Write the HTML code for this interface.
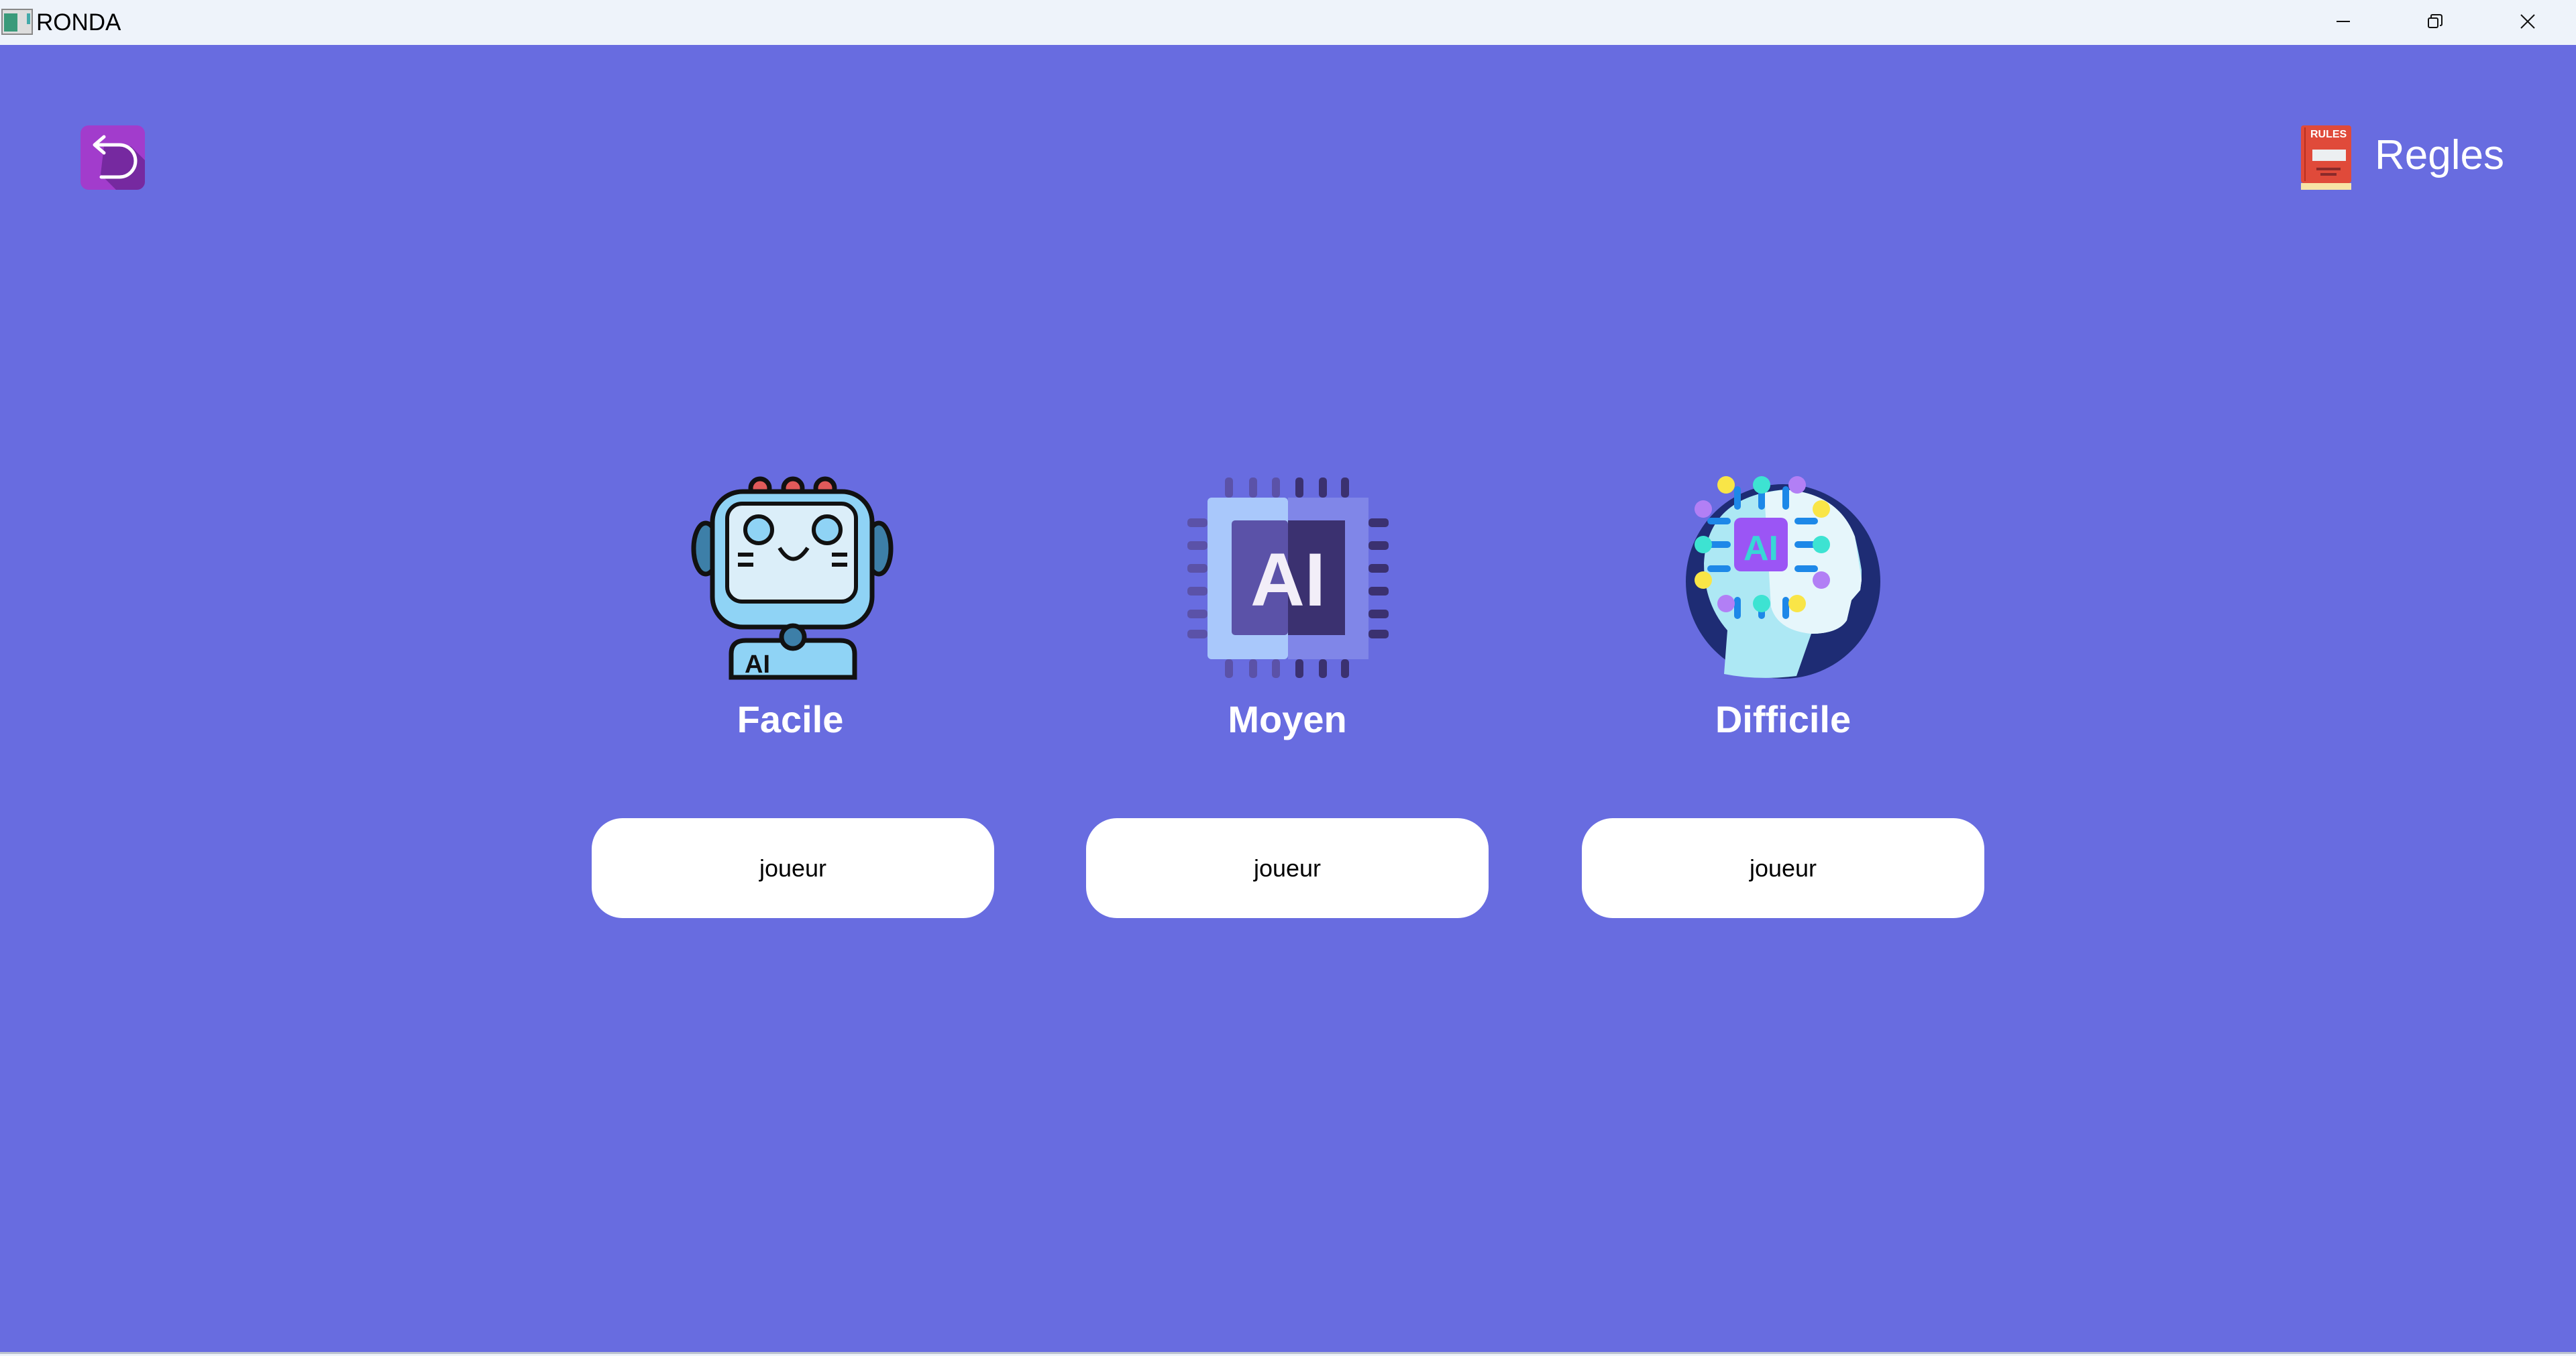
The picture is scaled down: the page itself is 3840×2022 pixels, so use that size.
<!DOCTYPE html>
<html><head><meta charset="utf-8"><style>
html,body{margin:0;padding:0;width:3840px;height:2022px;overflow:hidden;background:#eef3fa;font-family:"Liberation Sans",sans-serif}
.main{position:absolute;left:0;top:67px;width:3840px;height:1949px;background:#686ce0}
.line{position:absolute;left:0;top:2016px;width:3840px;height:3px;background:#bcc3cf}
.title{position:absolute;left:54px;top:14px;font-size:35px;color:#000}
.lbl{position:absolute;color:#fff;font-weight:bold;font-size:56px;text-align:center;width:600px;top:1040px}
.btn{position:absolute;top:1220px;width:600px;height:149px;background:#fff;border-radius:46px;text-align:center;line-height:149px;font-size:36px;color:#000}
.reg{position:absolute;left:3540px;top:196px;font-size:62px;color:#fff}
svg{position:absolute;left:0;top:0}
</style></head><body>
<div class="main"></div>
<div class="line"></div>
<div class="title">RONDA</div>
<div class="lbl" style="left:878px">Facile</div>
<div class="lbl" style="left:1619px">Moyen</div>
<div class="lbl" style="left:2358px">Difficile</div>
<div class="btn" style="left:882px">joueur</div>
<div class="btn" style="left:1619px">joueur</div>
<div class="btn" style="left:2358px">joueur</div>
<div class="reg">Regles</div>
<svg width="3840" height="2022" viewBox="0 0 3840 2022">
<rect x="3" y="14" width="45" height="37" fill="#ddd" stroke="#888" stroke-width="2"/>
<rect x="6" y="20" width="20" height="27" fill="#3a9a7a"/>
<rect x="40" y="20" width="5" height="16" fill="#4aa"/>
<line x1="3483" y1="32" x2="3503" y2="32" stroke="#111" stroke-width="2"/>
<rect x="3620" y="27" width="14" height="14" rx="2" fill="none" stroke="#111" stroke-width="2"/>
<path d="M3624 27 V24 Q3624 22 3626 22 H3637 Q3640 22 3640 25 V36 Q3640 38 3637 38" fill="none" stroke="#111" stroke-width="2"/>
<path d="M3758 22 L3778 42 M3778 22 L3758 42" stroke="#111" stroke-width="2"/>
<clipPath id="bc"><rect x="120" y="187" width="96" height="96" rx="12"/></clipPath>
<rect x="120" y="187" width="96" height="96" rx="12" fill="#a23ccc"/>
<path d="M155 218 L195 218 L230 253 L230 300 L190 300 L150 260 Z" fill="#7629a0" clip-path="url(#bc)"/>
<path d="M143 216 H178 A19 19 0 0 1 178 264 H151" fill="none" stroke="#fff" stroke-width="5" stroke-linecap="round"/>
<path d="M155 204 L141 216 L155 228" fill="none" stroke="#fff" stroke-width="5" stroke-linecap="round" stroke-linejoin="round"/>
<rect x="3430" y="187" width="75" height="86" rx="4" fill="#e04a3a"/>
<rect x="3435" y="190" width="2" height="80" fill="#b83020"/>
<rect x="3430" y="273" width="75" height="10" fill="#f7e3a6"/>
<text x="3444" y="205" font-size="16" font-weight="bold" fill="#fff" font-family="Liberation Sans">RULES</text>
<rect x="3447" y="223" width="50" height="17" fill="#eceff1"/>
<rect x="3453" y="250" width="36" height="4" fill="#8a2a2a"/>
<rect x="3459" y="258" width="24" height="4" fill="#8a2a2a"/>
<g stroke="#111" stroke-width="7">
<circle cx="1133" cy="728" r="14" fill="#e05a5a"/>
<circle cx="1182" cy="728" r="14" fill="#e05a5a"/>
<circle cx="1230" cy="728" r="14" fill="#e05a5a"/>
<ellipse cx="1052" cy="818" rx="18" ry="38" fill="#3d7fa8"/>
<ellipse cx="1310" cy="818" rx="18" ry="38" fill="#3d7fa8"/>
<rect x="1062" y="733" width="238" height="202" rx="45" fill="#8fd3f5"/>
<rect x="1084" y="751" width="192" height="146" rx="22" fill="#dbeef9" stroke-width="6"/>
<circle cx="1131" cy="790" r="20" fill="#8fd3f5" stroke-width="6"/>
<circle cx="1233" cy="790" r="20" fill="#8fd3f5" stroke-width="6"/>
<path d="M1162 817 Q1182 850 1204 817" fill="none" stroke-width="6"/>
<path d="M1100 827 H1123 M1100 842 H1123 M1240 827 H1263 M1240 842 H1263" stroke-width="6"/>
<path d="M1090 1010 V975 Q1090 955 1112 955 H1252 Q1274 955 1274 975 V1010 Z" fill="#8fd3f5"/>
<circle cx="1182" cy="950" r="17" fill="#3d7fa8"/>
</g>
<text x="1110" y="1003" font-size="38" font-weight="bold" fill="#111" font-family="Liberation Sans">AI</text>
<g fill="#5b52a8">
<rect x="1826" y="712" width="12" height="30" rx="5"/><rect x="1862" y="712" width="12" height="30" rx="5"/><rect x="1896" y="712" width="12" height="30" rx="5"/>
<rect x="1826" y="983" width="12" height="28" rx="5"/><rect x="1862" y="983" width="12" height="28" rx="5"/><rect x="1896" y="983" width="12" height="28" rx="5"/>
<rect x="1770" y="773" width="30" height="13" rx="5"/><rect x="1770" y="807" width="30" height="13" rx="5"/><rect x="1770" y="841" width="30" height="13" rx="5"/><rect x="1770" y="875" width="30" height="13" rx="5"/><rect x="1770" y="909" width="30" height="13" rx="5"/><rect x="1770" y="939" width="30" height="13" rx="5"/>
</g>
<g fill="#3b3170">
<rect x="1931" y="712" width="12" height="30" rx="5"/><rect x="1966" y="712" width="12" height="30" rx="5"/><rect x="1999" y="712" width="12" height="30" rx="5"/>
<rect x="1931" y="983" width="12" height="28" rx="5"/><rect x="1966" y="983" width="12" height="28" rx="5"/><rect x="1999" y="983" width="12" height="28" rx="5"/>
<rect x="2040" y="773" width="30" height="13" rx="5"/><rect x="2040" y="807" width="30" height="13" rx="5"/><rect x="2040" y="841" width="30" height="13" rx="5"/><rect x="2040" y="875" width="30" height="13" rx="5"/><rect x="2040" y="909" width="30" height="13" rx="5"/><rect x="2040" y="939" width="30" height="13" rx="5"/>
</g>
<rect x="1800" y="742" width="120" height="241" rx="6" fill="#a9c8fb"/>
<rect x="1920" y="742" width="120" height="241" fill="#8086e8"/>
<rect x="1836" y="776" width="84" height="171" rx="5" fill="#5b52a8"/>
<rect x="1920" y="776" width="85" height="171" fill="#3b3170"/>
<text x="1920" y="903" font-size="112" font-weight="bold" fill="#f2eef8" text-anchor="middle" font-family="Liberation Sans">AI</text>
<circle cx="2658" cy="867" r="145" fill="#1e2c74"/>
<path d="M2570 1005 L2575 940 Q2540 900 2540 840 Q2545 740 2660 730 Q2740 735 2765 800 Q2772 830 2775 850 L2775 865 L2773 880 L2760 895 L2753 925 Q2740 945 2700 945 L2678 1008 Q2620 1015 2570 1005 Z" fill="#ade8f4"/>
<path d="M2660 730 Q2740 735 2765 800 L2775 865 L2773 880 L2760 895 L2753 925 Q2740 945 2700 945 Q2650 940 2640 905 L2630 735 Z" fill="#e6f6fb"/>
<g stroke="#1d88e8" stroke-width="10" stroke-linecap="round" fill="none">
<path d="M2590 730 V755 M2626 730 V755 M2662 730 V755 M2590 918 V895 M2626 918 V900 M2662 918 V895"/>
<path d="M2550 777 H2575 M2550 812 H2575 M2550 848 H2575 M2680 777 H2705 M2680 812 H2705 M2680 848 H2705"/>
</g>
<rect x="2585" y="772" width="80" height="80" rx="10" fill="#9b55f5"/>
<text x="2625" y="835" font-size="52" font-weight="bold" fill="#38d6d6" text-anchor="middle" font-family="Liberation Sans">AI</text>
<circle cx="2573" cy="723" r="13" fill="#f9e547"/><circle cx="2626" cy="723" r="13" fill="#3de3d2"/><circle cx="2679" cy="723" r="13" fill="#b27ff5"/>
<circle cx="2539" cy="759" r="13" fill="#b27ff5"/><circle cx="2715" cy="759" r="13" fill="#f9e547"/>
<circle cx="2539" cy="812" r="13" fill="#3de3d2"/><circle cx="2715" cy="812" r="13" fill="#3de3d2"/>
<circle cx="2539" cy="865" r="13" fill="#f9e547"/><circle cx="2715" cy="865" r="13" fill="#b27ff5"/>
<circle cx="2573" cy="900" r="13" fill="#b27ff5"/><circle cx="2626" cy="900" r="13" fill="#3de3d2"/><circle cx="2679" cy="900" r="13" fill="#f9e547"/>
</svg>
</body></html>
